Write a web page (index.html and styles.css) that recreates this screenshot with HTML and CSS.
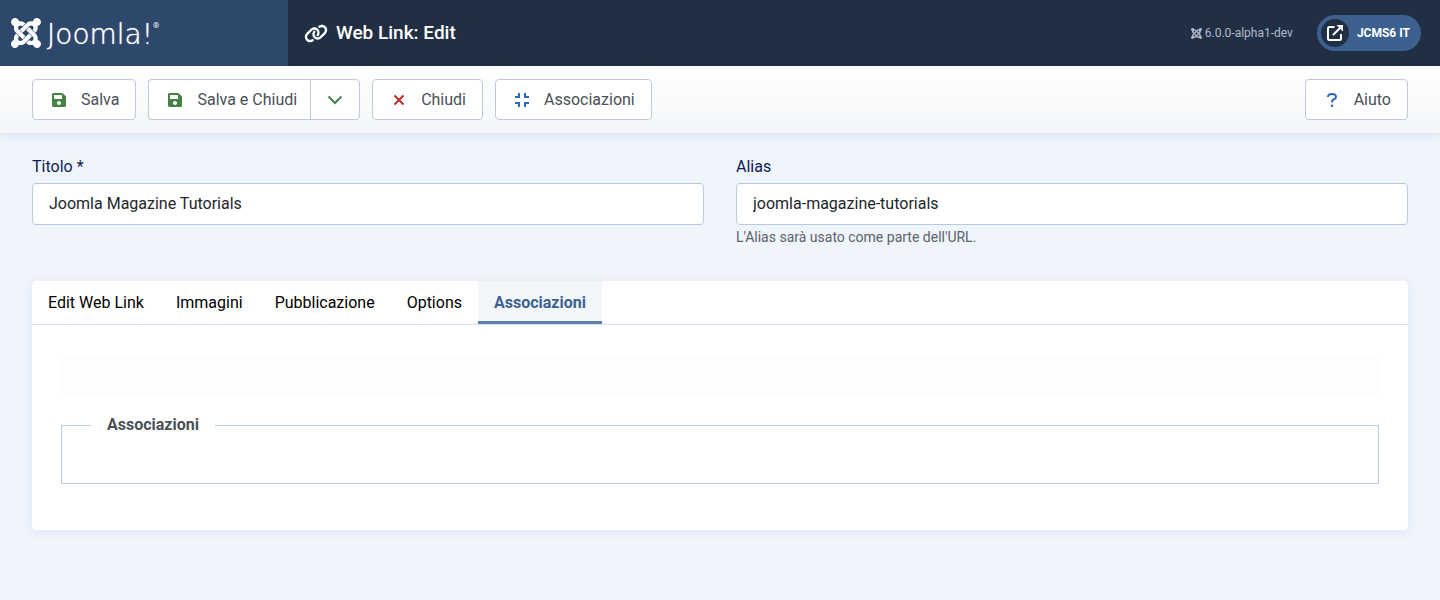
FILE: index.html
```html
<!DOCTYPE html>
<html lang="it">
<head>
<meta charset="utf-8">
<meta name="viewport" content="width=device-width, initial-scale=1">
<title>Web Link: Edit</title>
<link rel="stylesheet" href="styles.css">
</head>
<body>
<svg class="defs" aria-hidden="true">
  <symbol id="joomla" viewBox="0 32 448 448"><path d="M.6 92.1C.6 58.8 27.4 32 60.4 32c30 0 54.5 21.9 59.2 50.2 32.6-7.6 67.1.6 96.5 30l-44.3 44.3c-20.5-20.5-42.6-16.3-55.4-3.5-14.3 14.3-14.3 37.9 0 52.2l99.5 99.5-44 44.3c-87.7-87.2-49.7-49.7-99.8-99.7-26.8-26.5-35-64.8-24.8-98.9C20.4 144.6.6 120.7.6 92.1zm129.5 116.4l44.3 44.3c10-10 89.7-89.7 99.7-99.8 14.3-14.3 37.6-14.3 51.9 0 12.8 12.8 17 35-3.5 55.4l44 44.3c31.2-31.2 38.5-67.6 28.9-101.2 29.2-4.1 51.9-29.2 51.9-59.5 0-33.2-26.8-60.1-59.8-60.1-30.3 0-55.4 22.5-59.5 51.6-33.8-9.9-71.7-1.5-98.3 25.1-18.3 19.1-71.1 71.5-99.6 99.9zm266.3 152.2c8.2-32.7-.9-68.5-26.3-93.9-11.8-12.2 5 4.7-99.5-99.7l-44.3 44.3 99.7 99.7c14.3 14.3 14.3 37.6 0 51.9-12.8 12.8-35 17-55.4-3.5l-44 44.3c27.6 30.2 68 38.8 102.7 28 5.5 27.4 29.7 48.1 58.9 48.1 33 0 59.8-26.8 59.8-60.1 0-30.2-22.5-55-51.6-59.1zm-84.3-53.1l-44-44.3c-87 86.4-50.4 50.4-99.7 99.8-14.3 14.3-37.6 14.3-51.9 0-13.1-13.4-16.9-35.3 3.2-55.4l-44-44.3c-30.2 30.2-38 65.2-29.5 98.3-26.7 6-46.2 29.9-46.2 58.2C0 453.2 26.8 480 59.8 480c28.6 0 52.5-19.8 58.6-46.7 32.7 8.2 68.5-.6 94.2-26 32.1-32 12.2-12.4 99.5-99.7z"/></symbol>
  <symbol id="save" viewBox="0 32 448 448"><path d="M433.941 129.941l-83.882-83.882A48 48 0 0 0 316.118 32H48C21.49 32 0 53.49 0 80v352c0 26.51 21.49 48 48 48h352c26.51 0 48-21.49 48-48V163.882a48 48 0 0 0-14.059-33.941zM224 416c-35.346 0-64-28.654-64-64 0-35.346 28.654-64 64-64s64 28.654 64 64c0 35.346-28.654 64-64 64zm96-304.52V212c0 6.627-5.373 12-12 12H76c-6.627 0-12-5.373-12-12V108c0-6.627 5.373-12 12-12h228.52c3.183 0 6.235 1.264 8.485 3.515l3.48 3.48A11.996 11.996 0 0 1 320 111.48z"/></symbol>
</svg>

<header class="header">
  <a class="brand" href="#" aria-label="Joomla!">
    <svg class="brand-mark"><use href="#joomla"/></svg>
    <span class="brand-name">Joomla!</span><span class="brand-reg">®</span>
  </a>
  <div class="header-main">
    <h1 class="page-title">
      <svg class="title-icon" viewBox="0 0 640 512"><path d="M579.8 267.7c56.5-56.5 56.5-148 0-204.5c-50-50-128.8-56.5-186.3-15.4l-1.6 1.1c-14.4 10.3-17.7 30.3-7.4 44.6s30.3 17.7 44.6 7.4l1.6-1.1c32.1-22.9 76-19.3 103.8 8.6c31.5 31.5 31.5 82.5 0 114L422.3 334.8c-31.5 31.5-82.5 31.5-114 0c-27.9-27.9-31.5-71.8-8.6-103.8l1.1-1.6c10.3-14.4 6.9-34.4-7.4-44.6s-34.4-6.9-44.6 7.4l-1.1 1.6C206.5 251.2 213 330 263 380c56.5 56.5 148 56.5 204.5 0L579.8 267.7zM60.2 244.3c-56.5 56.5-56.5 148 0 204.5c50 50 128.8 56.5 186.3 15.4l1.6-1.1c14.4-10.3 17.7-30.3 7.4-44.6s-30.3-17.7-44.6-7.4l-1.6 1.1c-32.1 22.9-76 19.3-103.8-8.6C74 372 74 321 105.5 289.5L217.7 177.2c31.5-31.5 82.5-31.5 114 0c27.9 27.9 31.5 71.8 8.6 103.9l-1.1 1.6c-10.3 14.4-6.9 34.4 7.4 44.6s34.4 6.9 44.6-7.4l1.1-1.6C433.5 260.8 427 182 377 132c-56.5-56.5-148-56.5-204.5 0L60.2 244.3z"/></svg>
      Web Link: Edit
    </h1>
    <span class="version"><svg class="version-icon"><use href="#joomla"/></svg>6.0.0-alpha1-dev</span>
    <a class="site-link" href="#">
      <span class="site-icon"><svg viewBox="0 0 16 16"><path class="line" d="M7.5 2H2.5Q1 2 1 3.500V13.500Q1 15 2.500 15H12.500Q14 15 14 13.500V9M6 10L13 3"/><path d="M9.500 0H16V6.500z"/></svg></span>
      JCMS6 IT
    </a>
  </div>
</header>

<div class="toolbar" role="toolbar" aria-label="Toolbar">
  <button class="btn" type="button"><svg class="icon green"><use href="#save"/></svg>Salva</button>
  <div class="btn-group">
    <button class="btn btn-first" type="button"><svg class="icon green"><use href="#save"/></svg>Salva e Chiudi</button>
    <button class="btn btn-toggle" type="button" aria-label="Altre opzioni"><svg class="chevron" viewBox="0 0 16 16"><path d="M1.500 4.500L8 11L14.500 4.500"/></svg></button>
  </div>
  <button class="btn" type="button"><svg class="icon red" viewBox="0 0 14 14"><path class="cross" d="M2.500 2.500L11.500 11.500M11.500 2.500L2.500 11.500"/></svg>Chiudi</button>
  <button class="btn" type="button"><svg class="icon blue" viewBox="0 0 14 14"><path class="stroke" d="M0 4H4V0M10 0V4H14M0 10H4V14M10 14V10H14"/></svg>Associazioni</button>
  <button class="btn btn-help" type="button"><svg class="icon blue" viewBox="0 0 14 14"><path class="stroke" d="M3 4Q3 1 7 1T11 4Q11 5.500 8.500 6.500Q7 7.300 7 9.500"/><circle cx="7" cy="12.700" r="1.300"/></svg>Aiuto</button>
</div>

<main class="content">
  <form class="form">
    <div class="fields">
      <div class="field">
        <label for="title">Titolo *</label>
        <input id="title" type="text" value="Joomla Magazine Tutorials">
      </div>
      <div class="field">
        <label for="alias">Alias</label>
        <input id="alias" type="text" value="joomla-magazine-tutorials" aria-describedby="alias-help">
        <small id="alias-help">L'Alias sarà usato come parte dell'URL.</small>
      </div>
    </div>

    <section class="card">
      <div class="tabs" role="tablist">
        <button class="tab" type="button" role="tab" aria-selected="false">Edit Web Link</button>
        <button class="tab" type="button" role="tab" aria-selected="false">Immagini</button>
        <button class="tab" type="button" role="tab" aria-selected="false">Pubblicazione</button>
        <button class="tab" type="button" role="tab" aria-selected="false">Options</button>
        <button class="tab active" type="button" role="tab" aria-selected="true">Associazioni</button>
      </div>
      <div class="panel" role="tabpanel">
        <div class="notice"></div>
        <fieldset class="group">
          <legend>Associazioni</legend>
        </fieldset>
      </div>
    </section>
  </form>
</main>
</body>
</html>
```

FILE: styles.css
```css
* { box-sizing: border-box; }

body {
  margin: 0;
  min-height: 100vh;
  background: #f0f4fb;
  color: #22262a;
  font: 16px/24px Roboto, sans-serif;
}

button, input { font: inherit; }

svg { display: block; flex: none; fill: currentColor; }

.defs { position: absolute; width: 0; height: 0; }

.header {
  position: relative;
  z-index: 1;
  display: flex;
  height: 66px;
  background: #212f45;
  color: #fff;
}

.brand {
  display: flex;
  align-items: center;
  width: 288px;
  padding-left: 11px;
  background: #2e486b;
  color: #fff;
  text-decoration: none;
}

.brand-mark { width: 30px; height: 30px; margin-right: 6px; }

.brand-name {
  padding-top: 3px;
  font-family: "DejaVu Sans Light", "DejaVu Sans", sans-serif;
  font-size: 28px;
  font-weight: 200;
  line-height: 32px;
  text-shadow: 0 0 1px #fff;
}

.brand-reg { align-self: flex-start; padding-top: 18px; font-size: 8px; line-height: 16px; }

.header-main {
  display: flex;
  flex: 1;
  align-items: center;
  padding: 0 19px 0 16px;
}

.page-title {
  display: flex;
  align-items: center;
  gap: 8px;
  margin: 0 auto 0 0;
  font-size: 19px;
  font-weight: 500;
  line-height: 24px;
}

.title-icon { width: 24px; height: 19px; }

.version {
  display: flex;
  align-items: center;
  gap: 3px;
  margin-right: 24px;
  color: #b0bac8;
  font-size: 12px;
}

.version-icon { width: 11px; height: 11px; }

.site-link {
  display: flex;
  align-items: center;
  gap: 8px;
  height: 36px;
  padding: 0 11px 0 4px;
  border-radius: 18px;
  background: #3d618f;
  color: #fff;
  font-size: 12px;
  font-weight: 700;
  text-decoration: none;
}

.site-icon {
  display: grid;
  place-items: center;
  width: 28px;
  height: 28px;
  border-radius: 50%;
  background: #212f45;
}

.site-icon svg { width: 16px; height: 16px; }

.line { fill: none; stroke: currentColor; stroke-width: 2; }

.toolbar {
  display: flex;
  gap: 12px;
  padding: 13px 32px;
  background: linear-gradient(#fff, #f3f6f9);
  box-shadow: 0 2px 8px #d3dff2;
}

.btn {
  display: flex;
  align-items: center;
  gap: 15px;
  height: 41px;
  padding: 0 16px 0 19px;
  border: 1px solid #bfc8d8;
  border-radius: 4px;
  background: #fff;
  color: #495057;
}

.btn-group { display: flex; }
.btn-first { padding-right: 13px; border-right: 0; border-radius: 4px 0 0 4px; }
.btn-toggle { padding: 0 16px; border-radius: 0 4px 4px 0; }
.btn-help { margin-left: auto; }

.icon { width: 14px; height: 14px; }
.stroke, .cross { fill: none; stroke: currentColor; stroke-width: 2; }
.green { color: #448344; }
.red { color: #c52827; }
.blue { color: #2a69b8; }

.chevron { width: 16px; height: 16px; fill: none; stroke: #448344; stroke-width: 2; }

.content { padding: 22px 32px 32px; }

.fields {
  display: grid;
  grid-template-columns: 1fr 1fr;
  gap: 32px;
}

.field { display: flex; flex-direction: column; }

.field label { margin-bottom: 4px; color: #0c2153; }

.field input {
  width: 100%;
  height: 42px;
  padding: 0 16px 2px;
  border: 1px solid #b8c9e3;
  border-radius: 4px;
  background: #fff;
  color: #22262a;
}

.field small { margin-top: 1px; color: #5a626b; font-size: 14px; line-height: 22px; }

.card {
  margin-top: 33px;
  border-radius: 4px;
  background: #fff;
  box-shadow: 0 2px 8px #dbe5f5;
}

.tabs { display: flex; border-bottom: 1px solid #dae2f1; }

.tab {
  height: 43px;
  padding: 0 16px;
  border: 0;
  background: none;
  color: #000;
}

.tab:first-child { border-radius: 4px 0 0 0; }

.tab.active {
  background: #f2f6f9;
  box-shadow: inset 0 -3px #6280a7;
  color: #3d618f;
  font-weight: 700;
}

.panel { padding: 31px 29px 46px; }

.notice { height: 40px; border-radius: 4px; background: #fdfdfe; }

.group {
  min-height: 71px;
  margin: 17px 0 0;
  padding: 0 29px;
  border: 1px solid #b8c9e3;
}

.group legend { padding: 0 16px; color: #495057; font-weight: 700; }
```
